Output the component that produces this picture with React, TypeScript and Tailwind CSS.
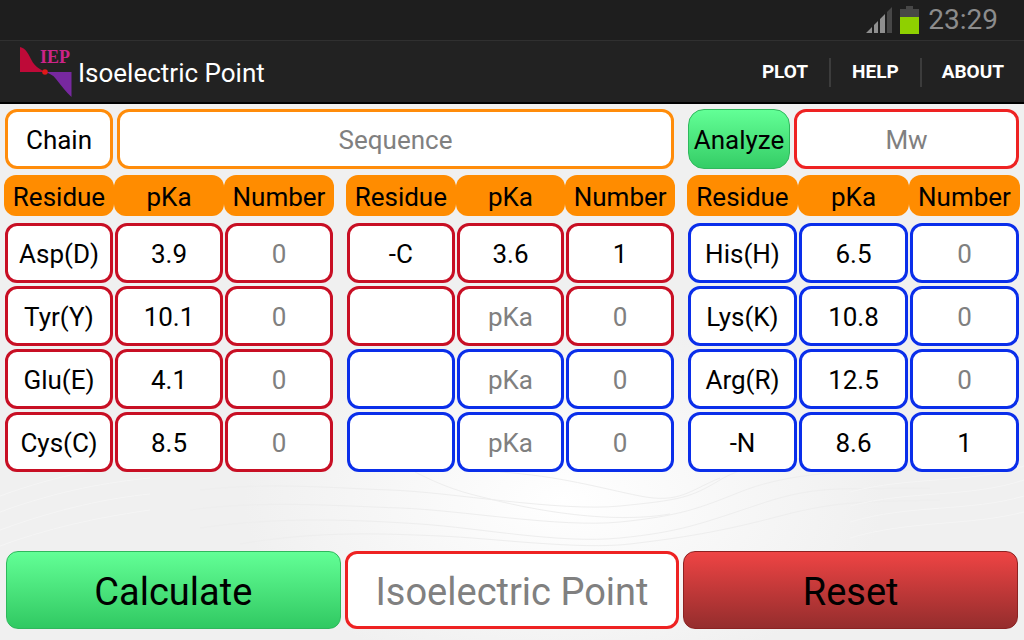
import { useState } from "react";

type Tone = "acid" | "base";

interface Row {
  residue: string;
  pka: string;
  count: string;
  tone: Tone;
}

const GROUPS: { name: string; rows: Row[] }[] = [
  {
    name: "Acidic residues",
    rows: [
      { residue: "Asp(D)", pka: "3.9", count: "", tone: "acid" },
      { residue: "Tyr(Y)", pka: "10.1", count: "", tone: "acid" },
      { residue: "Glu(E)", pka: "4.1", count: "", tone: "acid" },
      { residue: "Cys(C)", pka: "8.5", count: "", tone: "acid" },
    ],
  },
  {
    name: "Custom residues",
    rows: [
      { residue: "-C", pka: "3.6", count: "1", tone: "acid" },
      { residue: "", pka: "", count: "", tone: "acid" },
      { residue: "", pka: "", count: "", tone: "base" },
      { residue: "", pka: "", count: "", tone: "base" },
    ],
  },
  {
    name: "Basic residues",
    rows: [
      { residue: "His(H)", pka: "6.5", count: "", tone: "base" },
      { residue: "Lys(K)", pka: "10.8", count: "", tone: "base" },
      { residue: "Arg(R)", pka: "12.5", count: "", tone: "base" },
      { residue: "-N", pka: "8.6", count: "1", tone: "base" },
    ],
  },
];

const FIELD =
  "block h-[60px] w-full min-w-0 rounded-xl border-3 bg-white px-0 pt-0.5 pb-0 text-center text-[26px] font-normal text-black outline-none placeholder:text-[#808080]";

const TONES: Record<Tone, string> = {
  acid: "border-[#c80f24]",
  base: "border-[#0a2eea]",
};

function Logo() {
  return (
    <svg className="h-[52px] w-[52px] shrink-0" viewBox="0 0 52 52" aria-hidden="true">
      <path d="M0 1 C6 2 9 9 12 15 C14 19 19 23 25 26 L0 26 Z" fill="#be0a38" />
      <path d="M25 26 L51.500 26 L51.500 51 C46 46 41 39 36 33 C33 29 29 27 25 26 Z" fill="#77289f" />
      <circle cx="25" cy="26" r="2.800" fill="#e01818" />
      <text x="20" y="17" fontSize="18" fontWeight="700" fill="#cc2488" fontFamily="Liberation Serif, serif">
        IEP
      </text>
    </svg>
  );
}

function StatusBar() {
  return (
    <div className="flex h-10 items-center justify-end bg-[#1e1e1e] pr-[26px]">
      <svg className="mr-2 h-7 w-[26px]" viewBox="0 0 26 28" aria-label="Signal strength">
        <path d="M0 27 L6 21 V27 Z M8 19 L12 15 V27 H8 Z M14 13 L19 8 V27 H14 Z" fill="#8f8f8f" />
        <path d="M21 6 L26 1 V27 H21 Z" fill="#474747" />
      </svg>
      <svg className="mr-2 h-[30px] w-5" viewBox="0 0 20 30" aria-label="Battery">
        <path d="M6 1 H13 V4 H19 V12 H0 V4 H6 Z" fill="#474747" />
        <path d="M0 12 H19 V29 H0 Z" fill="#8fd000" />
      </svg>
      <time className="text-[28px] leading-10 font-normal text-[#8c8c8c]">23:29</time>
    </div>
  );
}

const WAVES = [
  "M200 386 C270 378 330 384 390 386 S560 408 620 402 S690 394 720 376 S800 350 900 352",
  "M190 406 C260 396 340 402 400 404 S560 424 620 418 S700 404 740 388 S830 366 920 366",
  "M200 424 C280 412 360 416 420 420 S560 440 620 434 S700 420 760 400 S840 386 930 384",
  "M240 440 C320 426 390 430 440 432 S580 446 630 440 S720 428 780 412 S870 398 940 396",
  "M415 368 C450 386 470 390 490 395 S600 422 670 410",
  "M500 368 C560 372 600 384 640 392 S690 386 720 374",
];

const HIGHLIGHTS = [
  "M0 392 C60 370 110 362 150 360 M850 388 C910 372 970 380 1024 362",
  "M0 408 C60 386 110 378 150 374 M850 402 C910 386 970 394 1024 376",
  "M0 426 C60 404 110 394 150 390 M850 418 C910 400 970 408 1024 392",
  "M0 442 C60 420 110 412 150 406 M850 434 C910 416 970 422 1024 408",
];

function Backdrop() {
  return (
    <svg
      className="pointer-events-none absolute inset-0 h-full w-full"
      viewBox="0 0 1024 536"
      preserveAspectRatio="none"
      fill="none"
      aria-hidden="true"
    >
      {WAVES.map((d) => (
        <path key={d} d={d} stroke="#eeeeee" />
      ))}
      {HIGHLIGHTS.map((d) => (
        <path key={d} d={d} stroke="#f5f5f5" />
      ))}
    </svg>
  );
}

function ResidueTable({ name, rows }: { name: string; rows: Row[] }) {
  return (
    <table aria-label={name} className="w-full table-fixed border-collapse">
      <thead>
        <tr>
          {["Residue", "pKa", "Number"].map((title) => (
            <th key={title} scope="col" className="p-0 pb-[7px] font-normal">
              <div className="h-[41px] rounded-xl bg-[#ff8c00] text-[26px] leading-[44px]">{title}</div>
            </th>
          ))}
        </tr>
      </thead>
      <tbody>
        {rows.map((row, i) => (
          <tr key={i}>
            {row.residue ? (
              <th scope="row" className="p-0 px-px pb-[3px] font-normal">
                <div className={`${FIELD} ${TONES[row.tone]} leading-[52px]`}>{row.residue}</div>
              </th>
            ) : (
              <td className="p-0 px-px pb-[3px]">
                <input aria-label={`Custom residue ${i}`} className={`${FIELD} ${TONES[row.tone]}`} />
              </td>
            )}
            <td className="p-0 px-px pb-[3px]">
              <input
                aria-label={`${row.residue || `Custom residue ${i}`} pKa`}
                defaultValue={row.pka}
                placeholder="pKa"
                inputMode="decimal"
                className={`${FIELD} ${TONES[row.tone]}`}
              />
            </td>
            <td className="p-0 px-px pb-[3px]">
              <input
                aria-label={`${row.residue || `Custom residue ${i}`} number`}
                defaultValue={row.count}
                placeholder="0"
                inputMode="numeric"
                className={`${FIELD} ${TONES[row.tone]}`}
              />
            </td>
          </tr>
        ))}
      </tbody>
    </table>
  );
}

export default function App() {
  const [formKey, setFormKey] = useState(0);

  return (
    <div className="flex min-h-screen flex-col bg-[#f1f1f2] font-['Roboto',sans-serif] text-black">
      <StatusBar />
      <header className="flex h-16 items-center border-t border-b-2 border-t-[#303030] border-b-black bg-[#222222] pl-5 text-white">
        <Logo />
        <h1 className="ml-1.5 flex-1 pt-1 text-[26px]">Isoelectric Point</h1>
        <nav className="flex items-center divide-x-2 divide-[#3c3c3c] pt-0.5 text-[19px] font-bold">
          <a href="#plot" className="px-[21px]">PLOT</a>
          <a href="#help" className="px-[21px]">HELP</a>
          <a href="#about" className="px-5">ABOUT</a>
        </nav>
      </header>

      <main className="relative flex flex-1 flex-col bg-[radial-gradient(ellipse_320px_180px_at_55%_74%,#ffffff,#f0f0f0)]">
        <Backdrop />
        <form
          key={formKey}
          onSubmit={(e) => e.preventDefault()}
          className="relative flex flex-1 flex-col px-1 pt-[5px] pb-[11px]"
        >
          <div className="grid grid-cols-[330fr_329fr_333fr] gap-x-3 gap-y-1.5">
            <div className="col-span-2 flex gap-1 px-px">
              <label htmlFor="sequence" className={`${FIELD} max-w-[108px] border-[#ff8c0a] leading-[52px]`}>
                Chain
              </label>
              <input id="sequence" placeholder="Sequence" className={`${FIELD} border-[#ff8c0a]`} />
            </div>
            <div className="flex gap-1 px-px">
              <button
                type="button"
                className="h-[60px] w-[102px] shrink-0 rounded-2xl border border-[#2fb85c] bg-linear-to-b from-[#62ff96] to-[#34cd66] pt-0.5 text-[26px]"
              >
                Analyze
              </button>
              <input aria-label="Molecular weight" readOnly placeholder="Mw" className={`${FIELD} border-[#ee2222]`} />
            </div>
            {GROUPS.map((group) => (
              <ResidueTable key={group.name} name={group.name} rows={group.rows} />
            ))}
          </div>

          <div className="mt-auto grid grid-cols-3 gap-1 px-0.5 text-[38px]">
            <button
              type="submit"
              className="h-[78px] rounded-xl border border-[#2fb85c] bg-linear-to-b from-[#62ff96] to-[#30c962] pt-1"
            >
              Calculate
            </button>
            <input
              aria-label="Isoelectric point"
              readOnly
              placeholder="Isoelectric Point"
              className="h-[78px] w-full min-w-0 rounded-xl border-3 border-[#ee2222] bg-white pt-1 text-center outline-none placeholder:text-[#808080]"
            />
            <button
              type="button"
              onClick={() => setFormKey((k) => k + 1)}
              className="h-[78px] rounded-xl border border-[#8c2222] bg-linear-to-b from-[#ef4444] to-[#952d2d] pt-1"
            >
              Reset
            </button>
          </div>
        </form>
      </main>
    </div>
  );
}
